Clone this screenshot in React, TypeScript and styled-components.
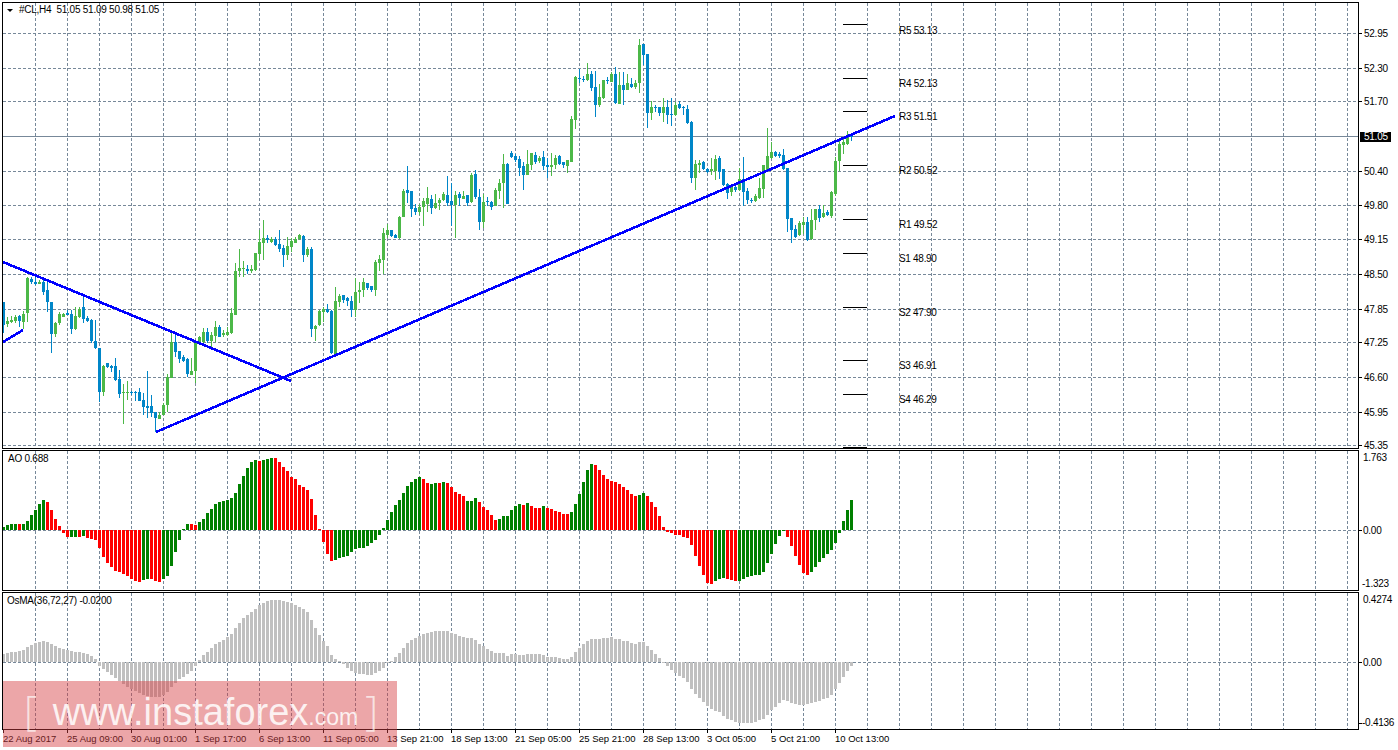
import React from "react";
import styled, { createGlobalStyle } from "styled-components";

const GREEN = "#4cb848";
const BLUE = "#0086c8";
const GRID = "#778899";

// candles are read off 3x crops: bodyTop,bodyBottom,wickTop,wickBottom, y = base + v / 3
const candleRows: { base: number; bars: string }[] = [
  {
    base: 230,
    bars: "b216,285,216,310 g273,282,262,290 g270,276,258,280 g262,272,255,278 b258,272,255,292 g252,275,242,298 g145,250,142,275 b148,155,140,162 b155,161,142,165 g155,161,150,162 b155,185,150,195 b180,215,155,245 b216,312,216,368 g278,312,275,320 g252,278,245,285 g252,260,248,262 b250,254,240,256 b252,297,240,312 g258,297,232,300 g237,262,232,265 b232,268,195,278 b264,272,258,275 b270,333,268,338 b333,355,270,358 b355,486,355,516 g408,486,405,498 b400,412,398,415 b408,414,404,425 b408,450,384,452 b448,492,420,505 g487,490,462,582 g487,490,452,510 b487,489,482,496 b487,489,482,512 b487,513,475,514 b510,530,490,555 b528,535,422,565 b528,548,495,560 b546,565,545,605 g556,567,545,568 g526,556,520,555 g442,526,432,545 g335,444,305,445 b335,365,310,380 b363,388,362,398 b380,393,375,396 b387,432,385,440 g422,435,385,436 g335,422,330,458 g320,340,318,345 g307,335,295,340 b305,333,295,338 g315,333,305,350 g292,318,272,335 b290,320,285,322 g310,316,300,320 g306,316,290,318 g250,310,235,312 g124,254,98,255 g114,122,58,140 g114,117,92,140 b117,122,105,132 g117,122,105,130 g70,120,70,122 g36,72,0,90 g25,38,-30,90 b25,30,15,40 g28,36,20,38 b28,46,20,48 b42,58,0,65 b55,75,45,112 g48,75,20,90 g33,50,25,65 g28,38,20,40 g15,28,12,30 b18,75,15,95 g58,75,50,80 b58,296,52,320 g288,296,285,332 g243,286,240,288 g238,246,232,275 b238,246,222,250 b243,370,240,372 g213,372,172,375 g198,215,192,230 b195,210,195,218 b205,212,200,228",
  },
  {
    base: 130,
    bars: "b513,540,498,560 g486,540,445,560 g480,486,455,518 g456,480,445,500 b460,474,458,480 b468,480,468,485 g396,480,390,497 g387,398,375,422 g309,390,294,432 g300,315,282,325 b300,318,300,320 b316,323,312,325 g261,323,258,328 g183,260,178,262 b180,188,108,218 b183,238,183,260 b234,245,222,256 g232,246,222,255 g213,230,205,288 g204,222,170,246 b207,234,195,252 g219,234,192,236 g210,219,205,240 g192,210,185,212 b195,218,138,228 b214,224,160,288 g195,224,184,323 b192,204,185,228 g198,206,183,208 b195,219,195,228 g135,216,128,218 b132,200,120,208 b201,276,178,300 g216,276,192,294 b214,216,202,228 b216,230,212,240 g180,228,174,228 g159,182,148,208 g102,159,72,234 b102,222,100,222 b69,81,63,84 b78,90,72,95 b87,114,78,138 b108,135,96,180 g102,135,60,135 g69,105,69,120 b75,96,66,102 g84,93,78,100 b81,108,63,120 b105,110,84,145",
  },
  {
    base: 30,
    bars: "g405,411,369,438 g384,405,375,417 b378,402,375,405 b396,405,396,414 g390,408,390,429 g267,396,258,396 g141,270,138,298 b144,147,117,158 b146,149,138,156 g132,150,99,153 b132,174,123,183 b171,225,123,261 g201,225,162,231 g150,204,150,207 b150,153,141,162 g132,156,126,156 b132,219,111,222 g165,222,126,222 b165,180,126,225 g159,180,132,180 b162,172,144,175 g159,172,150,177 g45,159,27,190 b42,75,42,104 b72,249,72,294 g231,249,213,270 b231,234,225,247 b231,249,231,258 g231,249,204,276 b231,255,210,282 b252,255,204,288 g225,255,216,258 b222,234,213,236 b231,234,228,255 b237,279,225,282 b276,444,273,459 g402,444,390,480 g399,405,390,430 b396,417,393,420 b417,426,414,430 g417,423,384,436 g387,423,375,450 b384,426,378,447 b417,465,417,468 b462,489,459,507 g471,486,462,498 b471,480,462,486 g447,480,414,483 b447,486,381,528 b483,510,474,522 b510,513,504,519 g498,513,492,516 g474,504,444,507 g405,477,405,504 g378,420,294,420 g366,384,336,387 b366,378,363,380 b372,378,366,384 b375,417,357,420 b414,567,414,606 b564,600,564,639 b597,621,585,624 g579,615,573,618 g576,585,561,612 b576,630,561,633 g570,627,537,630 g537,570,537,600 b537,564,525,576 g549,561,525,564 b546,555,540,558 g486,558,483,564 g393,492,381,498 g342,393,324,423 g336,345,321,372 g321,342,303,345 b318,321,315,333",
  },
];

// the third row starts 5 bars back, so the tail of row two gets cut off at 137
const candles = (() => {
  const out: { color: string; top: number; bottom: number; high: number; low: number }[] = [];
  candleRows.forEach(({ base, bars }, row) => {
    const list = bars.split(" ");
    list.forEach((item, i) => {
      if (row === 2 && i === 0) out.splice(137);
      const [t, b, h, l] = item.slice(1).split(",").map(Number);
      out.push({
        color: item[0] === "g" ? GREEN : BLUE,
        top: Math.round(base + t / 3),
        bottom: Math.round(base + b / 3),
        high: Math.round(base + h / 3),
        low: Math.round(base + l / 3),
      });
    });
  });
  return out;
})();

const aoValues =
  "g246 g240 g237 g237 r237 g237 g228 g210 g195 g177 g165 r171 r195 r222 r243 r264 r276 g276 g276 r276 g273 r279 r282 r285 r309 r336 r354 r366 r378 r381 r387 r393 r402 r408 r411 g405 g402 r402 r408 r411 g402 g393 g363 g321 g285 g253 g237 r237 r240 g231 g222 g204 g192 g177 g171 g168 g165 g159 g144 g117 g93 g69 g51 g45 r48 g45 g42 g39 r39 r51 r66 r78 r96 r102 r120 r126 r135 r162 r210 r253 r291 r327 r348 g345 g339 g336 g333 g321 g312 g309 g309 g303 g294 g285 g270 g249 g225 g201 g180 g165 g144 g123 g111 g102 g96 r102 r114 g117 g114 r114 g111 r114 r126 r141 r147 r153 g168 g168 g159 r171 r186 r195 r210 r225 g222 g213 g213 g195 g183 g177 r180 g174 r183 r189 r189 g183 r189 r192 r198 r201 r207 r207 g201 g177 g147 g111 g75 g57 r60 r75 r90 r102 r108 r111 r117 r126 r135 r147 r153 g150 g144 r153 r171 r186 r213 r246 r261 r264 r270 r270 r276 r279 r300 r333 r363 r390 r414 r417 g408 g402 g399 r402 r405 r408 g408 g402 g396 g393 g390 g390 g381 g354 g327 g297 g273 g258 r276 r303 r333 r360 r384 r390 g381 g366 g351 g339 g327 g315 g294 g264 g228 g195 g165"
    .split(" ")
    .map((v) => ({
      color: v[0] === "g" ? "#008000" : "#ff0000",
      y: 445 + Number(v.slice(1)) / 3,
    }));

const osmaValues = [
  193, 190, 187, 186, 183, 180, 171, 165, 160, 156, 154, 156, 162, 168, 174, 177, 180, 183, 186, 187, 189, 193, 198, 208, 228, 237, 246, 255, 264, 273, 282, 291, 297, 303, 309, 315, 318, 321, 321, 321, 315, 306, 291, 279, 267, 261, 252, 243, 228, 210, 195, 186, 174, 162, 156, 150, 141, 132, 114, 99, 84, 75, 66, 57, 45, 39, 33, 30, 30, 30, 33, 36, 39, 45, 51, 57, 66, 90, 114, 135, 153, 168, 195, 207, 213, 221, 234, 243, 249, 252, 252, 255, 255, 249, 243, 234, 220, 213, 201, 189, 174, 159, 150, 144, 138, 132, 129, 126, 124, 123, 123, 123, 129, 132, 138, 141, 144, 144, 150, 162, 168, 177, 183, 189, 189, 189, 198, 192, 192, 195, 195, 192, 192, 192, 192, 195, 201, 201, 201, 204, 207, 207, 201, 186, 174, 162, 153, 147, 147, 147, 144, 144, 141, 147, 147, 153, 153, 159, 162, 156, 156, 168, 180, 192, 204, 216, 228, 240, 249, 258, 264, 276, 297, 312, 324, 336, 348, 357, 363, 366, 378, 387, 390, 396, 399, 399, 399, 399, 396, 390, 387, 375, 360, 351, 339, 330, 333, 339, 342, 345, 345, 342, 339, 336, 333, 327, 324, 315, 297, 279, 261, 243, 228,
].map((v) => ({ color: "#c0c0c0", y: 590 + v / 3 }));

const mainPrices = [
  { y: 33, label: "52.95" },
  { y: 68, label: "52.30" },
  { y: 101, label: "51.70" },
  { y: 171, label: "50.40" },
  { y: 205, label: "49.80" },
  { y: 239, label: "49.15" },
  { y: 274, label: "48.50" },
  { y: 309, label: "47.85" },
  { y: 342, label: "47.25" },
  { y: 377, label: "46.60" },
  { y: 412, label: "45.95" },
  { y: 445, label: "45.35" },
];

const pivots = [
  { y: 24, textY: 30, label: "R5 53.13" },
  { y: 78, textY: 83, label: "R4 52.13" },
  { y: 111, textY: 116, label: "R3 51.51" },
  { y: 165, textY: 170, label: "R2 50.52" },
  { y: 219, textY: 224, label: "R1 49.52" },
  { y: 253, textY: 258, label: "S1 48.90" },
  { y: 307, textY: 312, label: "S2 47.90" },
  { y: 360, textY: 365, label: "S3 46.91" },
  { y: 394, textY: 399, label: "S4 46.29" },
  { y: 447, textY: 0, label: "" },
];

const timeLabels = [
  "22 Aug 2017",
  "25 Aug 09:00",
  "30 Aug 01:00",
  "1 Sep 17:00",
  "6 Sep 13:00",
  "11 Sep 05:00",
  "13 Sep 21:00",
  "18 Sep 13:00",
  "21 Sep 05:00",
  "25 Sep 21:00",
  "28 Sep 13:00",
  "3 Oct 05:00",
  "5 Oct 21:00",
  "10 Oct 13:00",
];

const gridColumns = Array.from({ length: 42 }, (_, i) => 35.5 + i * 32);

const GlobalStyle = createGlobalStyle`
  html, body {
    margin: 0;
    background: #fff;
  }
`;

const Page = styled.div`
  position: relative;
  width: 1398px;
  height: 750px;
  padding: 2px 0 0 2px;
  box-sizing: border-box;
  overflow: hidden;
  background: #fff;
  font-family: "Liberation Sans", Arial, sans-serif;
  color: #000;
`;

const Panes = styled.div`
  display: flex;
  flex-direction: column;
  gap: 1px;
`;

const Pane = styled.div`
  display: flex;
`;

const PlotFrame = styled.div<{ $height: number }>`
  position: relative;
  box-sizing: border-box;
  width: 1357px;
  height: ${(p) => p.$height}px;
  border: 1px solid #000;
`;

const Plot = styled.svg`
  display: block;
  width: 100%;
  height: 100%;
  shape-rendering: crispEdges;
`;

const PriceAxis = styled.svg`
  display: block;
  flex: none;
  width: 39px;
  overflow: visible;
  shape-rendering: crispEdges;
`;

const AxisText = styled.text<{ $inverted?: boolean }>`
  font-size: 10px;
  letter-spacing: -0.25px;
  fill: ${(p) => (p.$inverted ? "#fff" : "#000")};
`;

const PivotText = styled.text`
  font-size: 10px;
  letter-spacing: -0.3px;
  fill: #000;
`;

const Caption = styled.div<{ $left: number; $top: number }>`
  position: absolute;
  left: ${(p) => p.$left}px;
  top: ${(p) => p.$top}px;
  display: flex;
  align-items: center;
  gap: 6px;
  font-size: 10px;
  line-height: 12px;
  letter-spacing: -0.25px;
  white-space: pre;
`;

const Arrow = styled.span`
  width: 0;
  height: 0;
  border-left: 3px solid transparent;
  border-right: 3px solid transparent;
  border-top: 3px solid #000;
`;

const TimeAxis = styled.div`
  display: flex;
`;

const TimeCell = styled.div`
  flex: none;
  width: 64px;
`;

const TimeTick = styled.div`
  width: 1px;
  height: 3px;
  margin-left: 1px;
  background: #000;
`;

const TimeLabel = styled.div`
  font-size: 9.5px;
  line-height: 12px;
  white-space: nowrap;
  padding-left: 1px;
`;

const Watermark = styled.div`
  position: absolute;
  left: 3px;
  top: 681px;
  width: 394px;
  height: 66px;
  background: rgba(214, 62, 66, 0.46);
  color: rgba(255, 255, 255, 0.85);
  display: flex;
  align-items: baseline;
  padding: 5px 0 0 21px;
  box-sizing: border-box;
  line-height: 48px;
  white-space: nowrap;
`;

const Bracket = styled.span`
  font-size: 40px;
  font-weight: 300;
  font-family: "Open Sans", sans-serif;
  opacity: 0.8;
`;

const Domain = styled.span`
  font-size: 38px;
  margin-left: 16px;
`;

const Tld = styled.span`
  font-size: 23px;
  margin-right: 7px;
`;

const Grid: React.FC<{ rows: number[]; from: number; to: number }> = ({ rows, from, to }) => (
  <g stroke={GRID} strokeDasharray="3 2" fill="none">
    {gridColumns.map((x) => (
      <line key={x} x1={x} x2={x} y1={from} y2={to} />
    ))}
    {rows.map((y) => (
      <line key={y} x1={3} x2={1358} y1={y + 0.5} y2={y + 0.5} />
    ))}
  </g>
);

const Histogram: React.FC<{ bars: { color: string; y: number }[]; zero: number }> = ({ bars, zero }) => (
  <g>
    {bars.map((bar, i) => {
      const y = Math.round(bar.y);
      return (
        <rect
          key={i}
          x={2 + i * 4}
          width={3}
          y={Math.min(y, zero)}
          height={Math.max(Math.abs(y - zero), 1)}
          fill={bar.color}
        />
      );
    })}
  </g>
);

const Candles: React.FC = () => (
  <g>
    {candles.map((c, i) => (
      <g key={i} fill={c.color}>
        <rect x={3 + i * 4} width={1} y={c.high} height={Math.max(c.low - c.high, 1)} />
        <rect x={2 + i * 4} width={3} y={c.top} height={Math.max(c.bottom - c.top, 1)} />
      </g>
    ))}
  </g>
);

const TrendLine: React.FC<{ x1: number; y1: number; x2: number; y2: number }> = (props) => (
  <line {...props} stroke="#0000ff" strokeWidth={2.6} />
);

const App: React.FC = () => (
  <Page>
    <GlobalStyle />
    <Panes>
      <Pane>
        <PlotFrame $height={447}>
          <Plot viewBox="3 3 1355 445">
            <Grid rows={mainPrices.map((p) => p.y)} from={3} to={448} />
            <line x1={3} x2={1358} y1={136.5} y2={136.5} stroke={GRID} />
            <Candles />
            <TrendLine x1={3} y1={262} x2={291} y2={381} />
            <TrendLine x1={156} y1={432} x2={895} y2={116} />
            <TrendLine x1={3} y1={342} x2={23} y2={330} />
            {pivots.map((p) => (
              <g key={p.y}>
                <rect x={843} y={p.y} width={24} height={1} fill="#000" />
                {p.label && (
                  <PivotText x={899} y={p.textY + 4}>
                    {p.label}
                  </PivotText>
                )}
              </g>
            ))}
          </Plot>
          <Caption $left={4} $top={1}>
            <Arrow />
            {"#CL,H4  51.05 51.09 50.98 51.05"}
          </Caption>
        </PlotFrame>
        <PriceAxis viewBox="1359 2 39 447" height={447}>
          {mainPrices.map((p) => (
            <g key={p.y}>
              <rect x={1359} y={p.y} width={3} height={1} fill="#000" />
              <AxisText x={1364} y={p.y + 4}>
                {p.label}
              </AxisText>
            </g>
          ))}
          <rect x={1360} y={132} width={31} height={10} fill="#000" />
          <AxisText x={1364} y={140} $inverted>
            51.05
          </AxisText>
        </PriceAxis>
      </Pane>
      <Pane>
        <PlotFrame $height={141}>
          <Plot viewBox="3 451 1355 139">
            <Grid rows={[530]} from={451} to={590} />
            <Histogram bars={aoValues} zero={530} />
          </Plot>
          <Caption $left={5} $top={2}>
            AO 0.688
          </Caption>
        </PlotFrame>
        <PriceAxis viewBox="1359 450 39 141" height={141}>
          <rect x={1359} y={530} width={3} height={1} fill="#000" />
          <AxisText x={1363} y={461}>1.763</AxisText>
          <AxisText x={1363} y={534}>0.00</AxisText>
          <AxisText x={1362} y={587}>-1.323</AxisText>
        </PriceAxis>
      </Pane>
      <Pane>
        <PlotFrame $height={138}>
          <Plot viewBox="3 593 1355 136">
            <Grid rows={[662]} from={593} to={729} />
            <Histogram bars={osmaValues} zero={662} />
          </Plot>
          <Caption $left={4} $top={2}>
            OsMA(36,72,27) -0.0200
          </Caption>
        </PlotFrame>
        <PriceAxis viewBox="1359 592 39 138" height={138}>
          <rect x={1359} y={662} width={3} height={1} fill="#000" />
          <rect x={1359} y={723} width={3} height={1} fill="#000" />
          <AxisText x={1363} y={603}>0.4274</AxisText>
          <AxisText x={1363} y={666}>0.00</AxisText>
          <AxisText x={1362} y={726}>-0.4136</AxisText>
        </PriceAxis>
      </Pane>
    </Panes>
    <TimeAxis>
      {timeLabels.map((label) => (
        <TimeCell key={label}>
          <TimeTick />
          <TimeLabel>{label}</TimeLabel>
        </TimeCell>
      ))}
    </TimeAxis>
    <Watermark>
      <Bracket>[</Bracket>
      <Domain>www.instaforex</Domain>
      <Tld>.com</Tld>
      <Bracket>]</Bracket>
    </Watermark>
  </Page>
);

export default App;
